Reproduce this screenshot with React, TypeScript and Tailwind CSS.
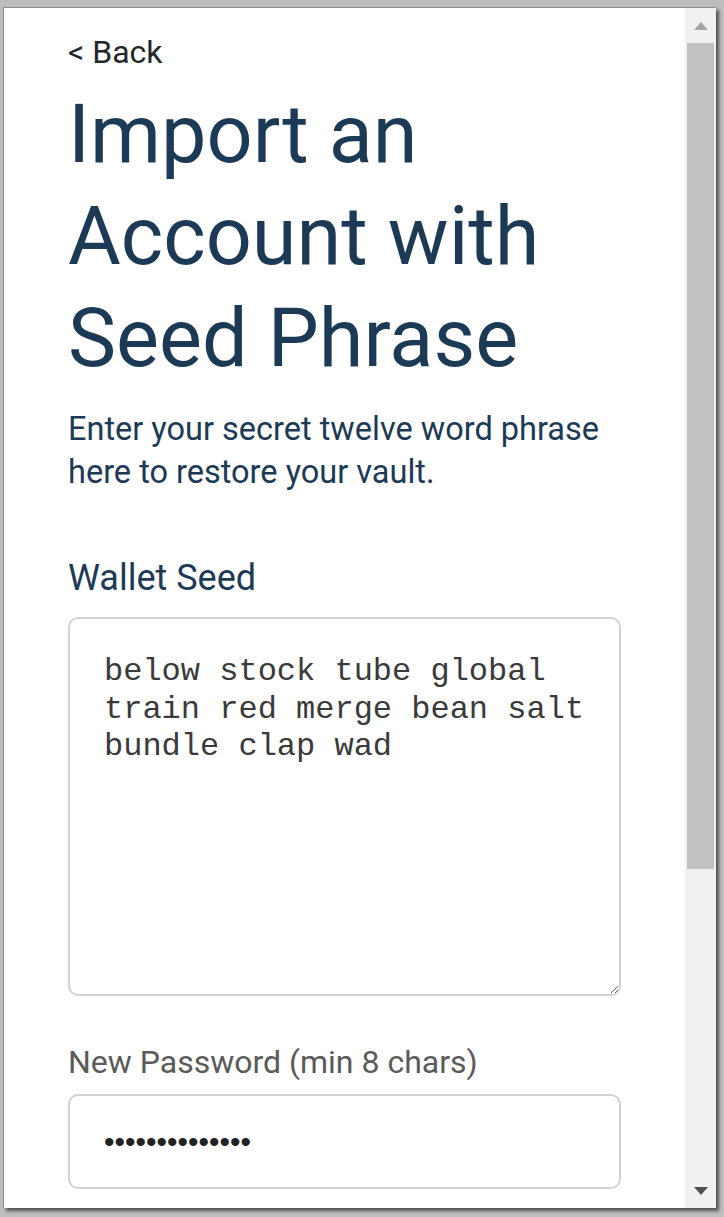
import { useState } from 'react';

function Scrollbar() {
  return (
    <div className="flex w-[31px] flex-col bg-[#f1f1f1]">
      <div className="flex h-[35px] items-center justify-center">
        <svg width="16" height="10" viewBox="0 0 16 10">
          <path d="M8 1 L15 9 L1 9 Z" fill="#a3a3a3" />
        </svg>
      </div>
      <div className="mx-[2px] h-[826px] bg-[#c1c1c1]" />
      <div className="flex-1" />
      <div className="flex h-[35px] items-center justify-center">
        <svg width="16" height="10" viewBox="0 0 16 10">
          <path d="M1 1 L15 1 L8 9 Z" fill="#505050" />
        </svg>
      </div>
    </div>
  );
}

export default function App() {
  const [seed, setSeed] = useState('below stock tube global train red merge bean salt bundle clap wad');
  const [password, setPassword] = useState('abcdefghijklmn');

  return (
    <div className="h-[1217px] w-[724px] bg-[#bdbdbd] pb-[9px] pl-[3px] pr-[8px] pt-[7px]">
      <div className="flex h-full border-l border-t border-[#8e8e8e] bg-white shadow-[3px_3px_3px_rgba(0,0,0,0.55)]">
        <main className="flex-1 overflow-hidden px-[64px] font-['Roboto',sans-serif]">
          {/* Back link */}
          <div className="pt-[22px] text-[32px] leading-[44px] text-[#24272a]">&lt; Back</div>

          {/* Heading */}
          <h1 className="mt-[10px] text-[81px] leading-[102px] text-[#1c3a56]">
            Import an Account with Seed Phrase
          </h1>

          <p className="mt-[18px] text-[32.5px] leading-[43px] text-[#1c3a56]">
            Enter your secret twelve word phrase here to restore your vault.
          </p>

          {/* Wallet seed */}
          <label className="mt-[62px] block text-[36px] leading-[44px] text-[#1c3a56]">Wallet Seed</label>
          <textarea
            value={seed}
            onChange={(e) => setSeed(e.target.value)}
            className="mt-[17px] block h-[379px] w-full rounded-[10px] border-2 border-[#d2d2d2] px-[34px] pt-[34px] font-['Liberation_Mono',monospace] text-[32px] leading-[37.5px] text-[#3a3a3a] outline-none"
          />

          {/* Password */}
          <label className="mt-[44px] block text-[32px] leading-[44px] text-[#5a5a5a]">
            New Password (min 8 chars)
          </label>
          <input
            type="password"
            value={password}
            onChange={(e) => setPassword(e.target.value)}
            className="mt-[10px] block h-[95px] w-full rounded-[10px] border-2 border-[#d2d2d2] px-[34px] font-['Liberation_Sans',sans-serif] text-[30px] text-[#222] outline-none"
          />
        </main>
        <Scrollbar />
      </div>
    </div>
  );
}
